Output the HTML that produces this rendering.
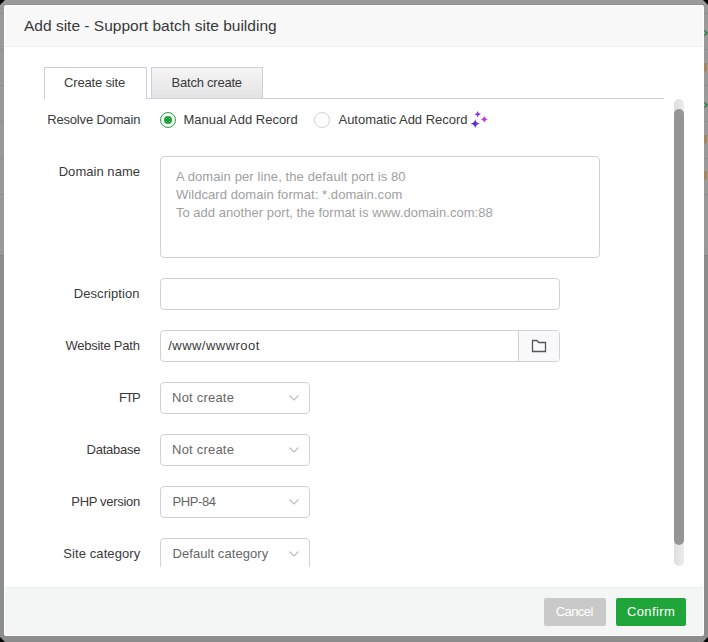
<!DOCTYPE html>
<html><head><meta charset="utf-8">
<style>
*{box-sizing:border-box;margin:0;padding:0}
html,body{width:708px;height:642px;overflow:hidden;background:#000;font-family:"Liberation Sans",sans-serif;color:#333}
.a{position:absolute}
.frame{left:0;top:0;width:708px;height:642px;clip-path:polygon(5px 0,703px 0,708px 5px,708px 637px,703px 642px,5px 642px,0 637px,0 5px);background:linear-gradient(#999 0,#999 255px,#8d8d8d 255px,#8d8d8d 100%)}
.rowl{left:0;width:708px;height:1px;background:#8e8e8e}
.modal{left:4px;top:5px;width:700px;height:631px;background:#fff;border-radius:2px;box-shadow:0 -1px 0 #909090}
.hdr{left:5px;top:6px;width:698px;height:40px;background:#f8f8f8}
.hdrb{left:4px;top:46px;width:700px;height:1px;background:#eee}
.tab{height:31px;border:1px solid #cdcde0;border-bottom:none}
.inp{border:1px solid #d2d2d2;border-radius:4px;background:#fff}
.tx{position:absolute;white-space:nowrap;line-height:16px}
.ftr{left:5px;top:588px;width:698px;height:47px;background:#f4f6f6}
.ftrb{left:5px;top:587px;width:698px;height:1px;background:#ebeeee}
.btn{top:598px;height:28px;border-radius:2px}
</style></head><body>
<div class="a frame"></div>
<div class="a rowl" style="top:13px"></div>
<div class="a rowl" style="top:49px"></div>
<div class="a rowl" style="top:85px"></div>
<div class="a rowl" style="top:121px"></div>
<div class="a rowl" style="top:158px"></div>
<div class="a rowl" style="top:194px"></div>
<div class="a rowl" style="top:255px;background:#858585"></div>
<svg class="a" style="left:700px;top:0" width="8" height="260">
<g fill="none" stroke="#2a7a40" stroke-width="1.3"><path d="M704.5 30.5 L707 33 L704.5 35.5" transform="translate(-700 0)"/><path d="M704.5 102.5 L707 105 L704.5 107.5" transform="translate(-700 0)"/></g>
<g fill="#b07a30"><rect x="4.5" y="63" width="1.8" height="8.5"/><rect x="4.5" y="135" width="1.8" height="8.5"/><rect x="4.5" y="171" width="1.8" height="8.5"/></g>
</svg>
<div class="a modal"></div>
<div class="a hdr"></div>
<div class="a hdrb"></div>

<!-- tabs -->
<div class="a" style="left:44px;top:98px;width:620px;height:1px;background:#d0d0dc"></div>
<div class="a tab" style="left:44px;top:67px;width:103px;height:32px;background:#fff"></div>
<div class="a tab" style="left:151px;top:67px;width:112px;height:31px;background:linear-gradient(#f6f6f6,#e3e3e3)"></div>

<!-- radios -->
<div class="a" style="left:160px;top:112px;width:16px;height:16px;border:1.5px solid #20a53a;border-radius:50%"></div>
<div class="a" style="left:164px;top:116px;width:8px;height:8px;background:#20a53a;border-radius:50%"></div>
<div class="a" style="left:314px;top:112px;width:16px;height:16px;border:1px solid #d2d2d2;border-radius:50%"></div>
<svg class="a" style="left:464px;top:106px" width="30" height="28" viewBox="0 0 30 28">
<defs><linearGradient id="sg" gradientUnits="userSpaceOnUse" x1="7" y1="19" x2="24" y2="14"><stop offset="0" stop-color="#3f2cc2"/><stop offset="1" stop-color="#d436f7"/></linearGradient></defs>
<path fill="url(#sg)" d="M13.70 5.10 Q14.08 7.92 16.90 8.30 Q14.08 8.68 13.70 11.50 Q13.32 8.68 10.50 8.30 Q13.32 7.92 13.70 5.10Z M20.30 9.50 Q20.76 12.84 24.10 13.30 Q20.76 13.76 20.30 17.10 Q19.84 13.76 16.50 13.30 Q19.84 12.84 20.30 9.50Z M11.25 13.10 Q11.80 17.15 15.85 17.70 Q11.80 18.25 11.25 22.30 Q10.70 18.25 6.65 17.70 Q10.70 17.15 11.25 13.10Z"/>
</svg>

<!-- inputs -->
<div class="a inp" style="left:160px;top:156px;width:440px;height:102px"></div>
<div class="a inp" style="left:160px;top:278px;width:400px;height:32px"></div>
<div class="a inp" style="left:160px;top:330px;width:400px;height:32px"></div>
<div class="a" style="left:518px;top:331px;width:41px;height:30px;background:#f9f9fb;border-left:1px solid #d2d2d2;border-radius:0 3px 3px 0"></div>
<svg class="a" style="left:530px;top:338px" width="18" height="16" viewBox="0 0 18 16">
<path d="M2.5 2.5 H6.8 L8.8 4.5 H15.5 V13.5 H2.5 Z" fill="none" stroke="#555" stroke-width="1.3" stroke-linejoin="miter"/>
</svg>

<div class="a inp" style="left:160px;top:382px;width:150px;height:32px"></div>
<div class="a inp" style="left:160px;top:434px;width:150px;height:32px"></div>
<div class="a inp" style="left:160px;top:486px;width:150px;height:32px"></div>
<div class="a" style="left:0;top:0;width:708px;height:567px;overflow:hidden;pointer-events:none">
<div class="a inp" style="left:160px;top:538px;width:150px;height:32px"></div>
</div>
<svg class="a" style="left:0;top:0" width="708" height="642">
<g fill="none" stroke="#bbb" stroke-width="1.1">
<path d="M289.5 395.5 L294 400 L298.5 395.5"/>
<path d="M289.5 447.5 L294 452 L298.5 447.5"/>
<path d="M289.5 499.5 L294 504 L298.5 499.5"/>
<path d="M289.5 551.5 L294 556 L298.5 551.5"/>
</g>
</svg>

<!-- scrollbar -->
<div class="a" style="left:674px;top:99px;width:10px;height:467px;border-radius:5px;background:linear-gradient(90deg,#dedede,#ececec)"></div>
<div class="a" style="left:674px;top:109px;width:10px;height:436px;border-radius:5px;background:#959595"></div>

<!-- footer -->
<div class="a ftrb"></div>
<div class="a ftr"></div>
<div class="a btn" style="left:544px;width:62px;background:#c9c9c9"></div>
<div class="a btn" style="left:616px;width:70px;background:#20a53a"></div>

<span id="title" class="tx" style="left:24.00px;top:18.29px;font-size:15.5px;color:#383838;letter-spacing:0.005px">Add site - Support batch site building</span>
<span id="create" class="tx" style="left:64.00px;top:75.44px;font-size:13px;color:#3a3a3a;letter-spacing:-0.160px">Create site</span>
<span id="batch" class="tx" style="left:171.60px;top:74.84px;font-size:13px;color:#3a3a3a;letter-spacing:-0.236px">Batch create</span>
<span id="resolve" class="tx" style="left:47.20px;top:112.34px;font-size:13px;color:#3a3a3a;letter-spacing:-0.169px">Resolve Domain</span>
<span id="manual" class="tx" style="left:183.50px;top:112.14px;font-size:13px;color:#3a3a3a;letter-spacing:0.000px">Manual Add Record</span>
<span id="auto" class="tx" style="left:338.50px;top:112.14px;font-size:13px;color:#3a3a3a;letter-spacing:-0.021px">Automatic Add Record</span>
<span id="domain" class="tx" style="left:58.70px;top:164.44px;font-size:13px;color:#3a3a3a;letter-spacing:0.040px">Domain name</span>
<span id="ph1" class="tx" style="left:175.90px;top:169.44px;font-size:13px;color:#a0a0a0;letter-spacing:0.105px">A domain per line, the default port is 80</span>
<span id="ph2" class="tx" style="left:175.90px;top:187.44px;font-size:13px;color:#a0a0a0;letter-spacing:0.069px">Wildcard domain format: *.domain.com</span>
<span id="ph3" class="tx" style="left:175.90px;top:205.44px;font-size:13px;color:#a0a0a0;letter-spacing:0.035px">To add another port, the format is www.domain.com:88</span>
<span id="desc" class="tx" style="left:73.70px;top:286.04px;font-size:13px;color:#3a3a3a;letter-spacing:0.080px">Description</span>
<span id="path" class="tx" style="left:65.40px;top:338.04px;font-size:13px;color:#3a3a3a;letter-spacing:-0.236px">Website Path</span>
<span id="root" class="tx" style="left:168.20px;top:338.04px;font-size:13px;color:#3a3a3a;letter-spacing:0.473px">/www/wwwroot</span>
<span id="ftp" class="tx" style="left:119.00px;top:390.44px;font-size:13px;color:#3a3a3a;letter-spacing:-1.500px">FTP</span>
<span id="notc1" class="tx" style="left:172.10px;top:390.44px;font-size:13px;color:#666;letter-spacing:0.200px">Not create</span>
<span id="db" class="tx" style="left:86.50px;top:442.44px;font-size:13px;color:#3a3a3a;letter-spacing:-0.229px">Database</span>
<span id="notc2" class="tx" style="left:172.10px;top:442.44px;font-size:13px;color:#666;letter-spacing:0.200px">Not create</span>
<span id="php" class="tx" style="left:71.30px;top:494.44px;font-size:13px;color:#3a3a3a;letter-spacing:-0.320px">PHP version</span>
<span id="php84" class="tx" style="left:172.50px;top:494.44px;font-size:13px;color:#666;letter-spacing:-0.400px">PHP-84</span>
<span id="cat" class="tx" style="left:63.20px;top:546.44px;font-size:13px;color:#3a3a3a;letter-spacing:0.100px">Site category</span>
<span id="defc" class="tx" style="left:172.50px;top:546.44px;font-size:13px;color:#666;letter-spacing:0.067px">Default category</span>
<span id="cancel" class="tx" style="left:555.70px;top:604.44px;font-size:13px;color:#fff;letter-spacing:-0.560px">Cancel</span>
<span id="confirm" class="tx" style="left:627.00px;top:604.44px;font-size:13px;color:#fff;letter-spacing:0.367px">Confirm</span>
</body></html>
